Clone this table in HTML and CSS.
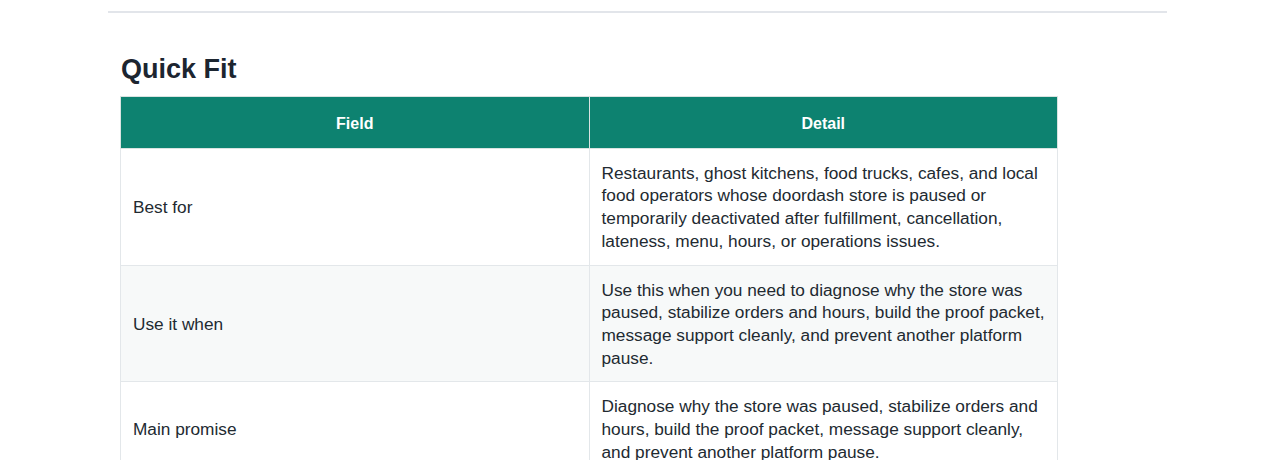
FILE: index.html
```html
<!DOCTYPE html>
<html lang="en">
<head>
<meta charset="utf-8">
<title>Quick Fit</title>
<link rel="stylesheet" href="styles.css">
</head>
<body>
<div class="page">
  <div class="rule"></div>
  <section class="section">
    <h2 class="title">Quick Fit</h2>
    <table class="fit-table">
      <thead>
        <tr><th>Field</th><th>Detail</th></tr>
      </thead>
      <tbody>
        <tr>
          <td>Best for</td>
          <td>Restaurants, ghost kitchens, food trucks, cafes, and local food operators whose doordash store is paused or temporarily deactivated after fulfillment, cancellation, lateness, menu, hours, or operations issues.</td>
        </tr>
        <tr>
          <td>Use it when</td>
          <td>Use this when you need to diagnose why the store was paused, stabilize orders and hours, build the proof packet, message support cleanly, and prevent another platform pause.</td>
        </tr>
        <tr>
          <td>Main promise</td>
          <td>Diagnose why the store was paused, stabilize orders and hours, build the proof packet, message support cleanly, and prevent another platform pause.</td>
        </tr>
      </tbody>
    </table>
  </section>
</div>
</body>
</html>
```

FILE: styles.css
```css
html, body {
  margin: 0;
  padding: 0;
  background: #ffffff;
}
body {
  font-family: "Liberation Sans", Arial, Helvetica, sans-serif;
  color: #222a31;
}
.page {
  width: 1059px;
  margin: 0 auto;
}
.rule {
  height: 2px;
  background: #e2e5ea;
  margin-top: 11px;
}
.section {
  padding: 0 12px;
}
.title {
  font-size: 27px;
  line-height: 33px;
  font-weight: 700;
  color: #1c2530;
  margin: 40px 0 10px 1px;
}
.fit-table {
  width: 938px;
  border-collapse: collapse;
  table-layout: fixed;
  font-size: 17.25px;
  line-height: 22.7px;
}
.fit-table th {
  background: #0d8270;
  color: #ffffff;
  font-size: 16px;
  font-weight: 700;
  text-align: center;
  padding: 16px 12px 12px;
  border: 1px solid #d9e3e1;
}
.fit-table td {
  padding: 13px 12px 12px;
  border: 1px solid #e3e7ea;
  vertical-align: middle;
  text-align: left;
}
.fit-table tbody tr:nth-child(even) td {
  background: #f7f9f9;
}
```
